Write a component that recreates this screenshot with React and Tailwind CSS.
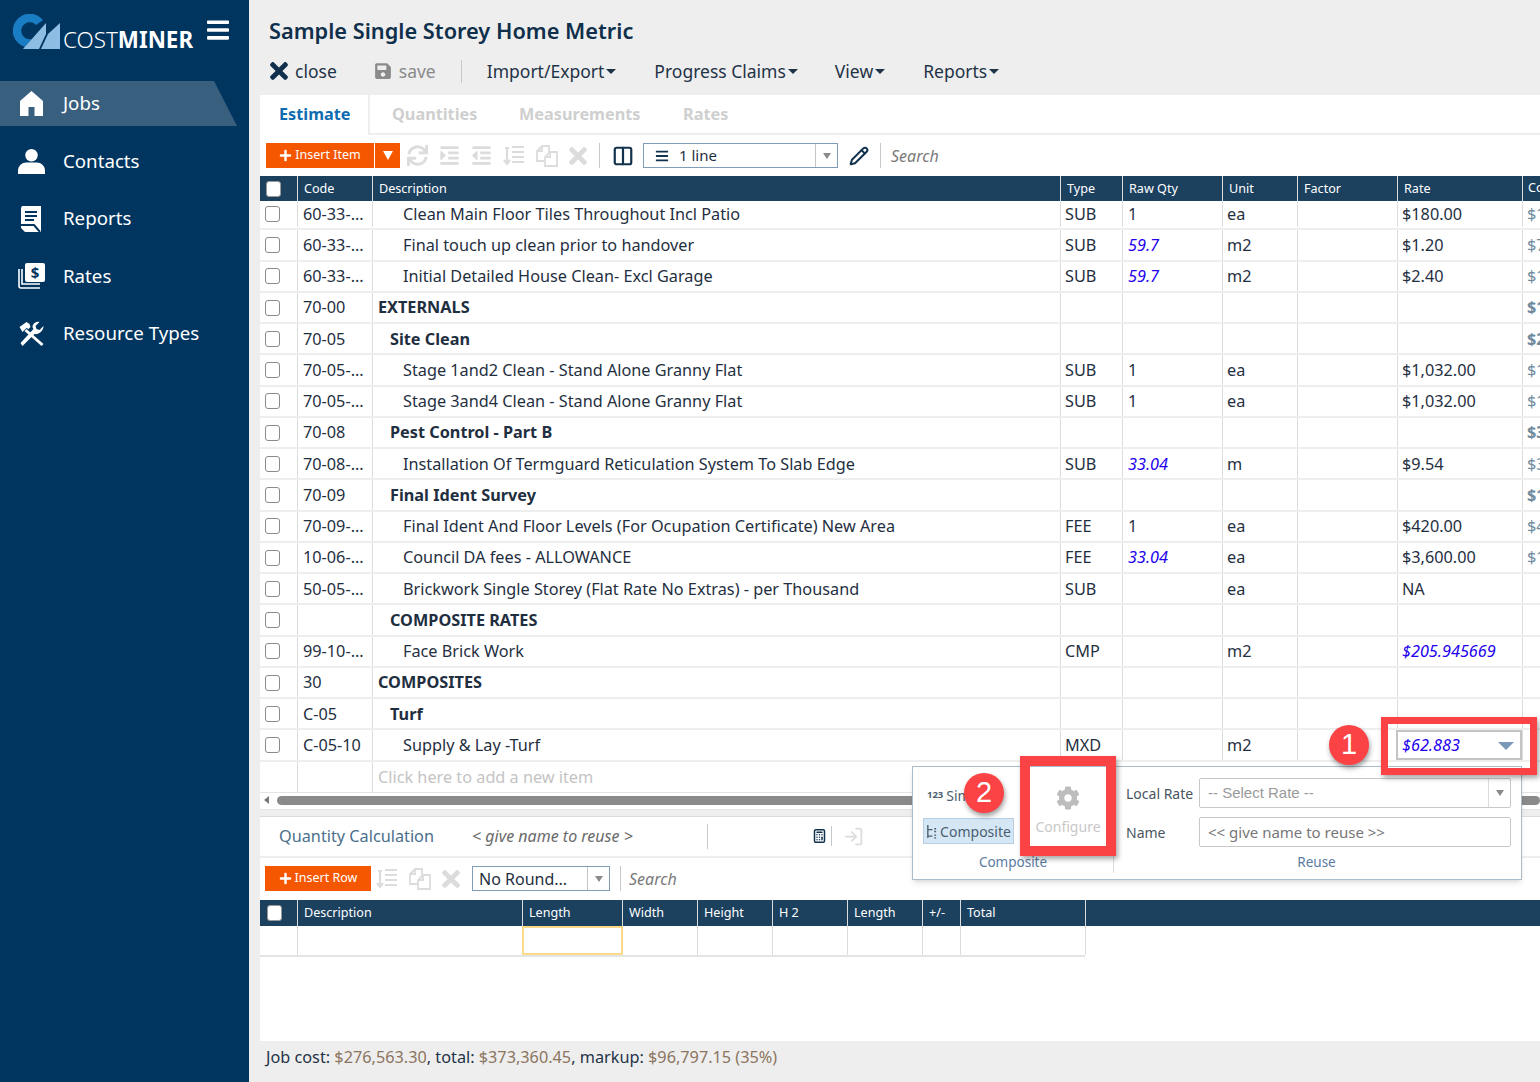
import React from 'react';
import { Pencil, Calculator, LogIn, Columns2 } from 'lucide-react';
import { FaTimes, FaSave, FaSync, FaIndent, FaOutdent, FaBars, FaCog, FaPlus } from 'react-icons/fa';

const COLS = 'grid grid-cols-[38px_75px_688px_62px_100px_75px_100px_125px_1fr]';
const QCOLS = 'grid grid-cols-[38px_225px_100px_75px_75px_75px_75px_38px_125px] w-[825px]';

const rows = [
  { code: '60-33-...', desc: 'Clean Main Floor Tiles Throughout Incl Patio', lvl: 2, type: 'SUB', qty: '1', unit: 'ea', rate: '$180.00', cost: '$180.00', first: true },
  { code: '60-33-...', desc: 'Final touch up clean prior to handover', lvl: 2, type: 'SUB', qty: '59.7', blueQty: true, unit: 'm2', rate: '$1.20', cost: '$71.64' },
  { code: '60-33-...', desc: 'Initial Detailed House Clean- Excl Garage', lvl: 2, type: 'SUB', qty: '59.7', blueQty: true, unit: 'm2', rate: '$2.40', cost: '$143.28' },
  { code: '70-00', desc: 'EXTERNALS', lvl: 0, bold: true, cost: '$1' },
  { code: '70-05', desc: 'Site Clean', lvl: 1, bold: true, cost: '$2' },
  { code: '70-05-...', desc: 'Stage 1and2 Clean - Stand Alone Granny Flat', lvl: 2, type: 'SUB', qty: '1', unit: 'ea', rate: '$1,032.00', cost: '$1,032.00' },
  { code: '70-05-...', desc: 'Stage 3and4 Clean - Stand Alone Granny Flat', lvl: 2, type: 'SUB', qty: '1', unit: 'ea', rate: '$1,032.00', cost: '$1,032.00' },
  { code: '70-08', desc: 'Pest Control - Part B', lvl: 1, bold: true, cost: '$3' },
  { code: '70-08-...', desc: 'Installation Of Termguard Reticulation System To Slab Edge', lvl: 2, type: 'SUB', qty: '33.04', blueQty: true, unit: 'm', rate: '$9.54', cost: '$315.20' },
  { code: '70-09', desc: 'Final Ident Survey', lvl: 1, bold: true, cost: '$1' },
  { code: '70-09-...', desc: 'Final Ident And Floor Levels (For Ocupation Certificate) New Area', lvl: 2, type: 'FEE', qty: '1', unit: 'ea', rate: '$420.00', cost: '$420.00' },
  { code: '10-06-...', desc: 'Council DA fees - ALLOWANCE', lvl: 2, type: 'FEE', qty: '33.04', blueQty: true, unit: 'ea', rate: '$3,600.00', cost: '$118,944' },
  { code: '50-05-...', desc: 'Brickwork Single Storey (Flat Rate No Extras) - per Thousand', lvl: 2, type: 'SUB', unit: 'ea', rate: 'NA' },
  { code: '', desc: 'COMPOSITE RATES', lvl: 1, bold: true },
  { code: '99-10-...', desc: 'Face Brick Work', lvl: 2, type: 'CMP', unit: 'm2', rate: '$205.945669', blueRate: true },
  { code: '30', desc: 'COMPOSITES', lvl: 0, bold: true },
  { code: 'C-05', desc: 'Turf', lvl: 1, bold: true },
  { code: 'C-05-10', desc: 'Supply & Lay -Turf', lvl: 2, type: 'MXD', unit: 'm2' },
];

const nav = [
  { label: 'Jobs', icon: <HomeIcon />, active: true },
  { label: 'Contacts', icon: <UserIcon /> },
  { label: 'Reports', icon: <ReportIcon /> },
  { label: 'Rates', icon: <RatesIcon /> },
  { label: 'Resource Types', icon: <ToolsIcon /> },
];

function HomeIcon() {
  return (
    <svg viewBox="0 0 23 25" className="w-[23px] h-[25px] ml-[2px]" fill="white">
      <path d="M11.5 0L23 10V25H14.5V16H8.5V25H0V10z" />
    </svg>
  );
}

function UserIcon() {
  return (
    <svg viewBox="0 0 26 26" className="w-[27px] h-[27px]" fill="white">
      <circle cx="13" cy="7" r="6" />
      <path d="M0 25v-3c0-5 4-8 8-8h10c4 0 8 3 8 8v3z" />
    </svg>
  );
}

function ReportIcon() {
  return (
    <svg viewBox="0 0 22 26" className="w-[22px] h-[26px] ml-[2px]">
      <path d="M2 0h19v26H5l-4-4V2z" fill="white" />
      <path d="M5 6h12M5 10h12M5 14h9M0 19h14l6 7" stroke="#00355f" strokeWidth="2" fill="none" />
    </svg>
  );
}

function RatesIcon() {
  return (
    <svg viewBox="0 0 27 26" className="w-[27px] h-[26px]">
      <rect x="7" y="0" width="20" height="19" rx="2" fill="white" />
      <path d="M1 6v17a2 2 0 0 0 2 2h19M4 6v15h18" stroke="white" strokeWidth="1.6" fill="none" />
      <text x="17" y="15" fontSize="15" fontWeight="700" fill="#00355f" textAnchor="middle" fontFamily="Noto Sans">$</text>
    </svg>
  );
}

function ToolsIcon() {
  return (
    <svg viewBox="0 0 26 26" className="w-[27px] h-[26px]" fill="white">
      <path d="M1 6l7-5 3 2 1 3-2 2-2-1-4 4z" />
      <path d="M8 8l17 15-2 2L6 10z" />
      <path d="M25 5l-4 4-3-1-1-3 4-4c-3-1-6 1-7 4 0 1 0 2 1 3L2 22l2 3 12-12c4 1 9-3 9-8z" />
    </svg>
  );
}

function Logo() {
  return (
    <svg viewBox="0 0 48 36" className="w-[48px] h-[36px] shrink-0">
      <path d="M30 6A17 17 0 1 0 12 33L19 25A8.5 8.5 0 1 1 23 11z" fill="#1a7dc4" />
      <path d="M10 35L33 9V20L26 35z" fill="#8dbde3" />
      <path d="M28 35L35 20L47 9V35z" fill="#8dbde3" />
    </svg>
  );
}

function RowsIcon() {
  return (
    <svg viewBox="0 0 22 22" className="w-[22px] h-[22px]" fill="none" stroke="#dcdcdc" strokeWidth="2.2">
      <path d="M9 2h12M9 7h12M9 12h12M9 17h12M4 3v15M1 15l3 4 3-4M2 3h4" />
    </svg>
  );
}

function CopyFaded() {
  return (
    <svg viewBox="0 0 22 22" className="w-[22px] h-[22px]" fill="none" stroke="#dcdcdc" strokeWidth="1.8">
      <path d="M8 16H1V6l5-5h7v6" />
      <path d="M14 7h7v14H9V12z" />
      <path d="M9 12h5V7M1 6h5V1" />
    </svg>
  );
}

function DisabledX() {
  return <FaTimes className="w-[18px] h-[26px] text-[#dcdcdc]" />;
}

function Check({ white }) {
  return (
    <span className={`block w-[15px] h-[16px] rounded-[3px] border ${white ? 'bg-white border-[#999]' : 'bg-white border-[#8a8a8a]'}`} />
  );
}

function Combo({ className, children }) {
  return (
    <div className={`flex items-stretch border border-[#7f9db9] bg-white ${className}`}>
      <div className="flex-1 flex items-center min-w-0">{children}</div>
      <div className="w-[22px] border-l border-[#c5c5c5] flex items-center justify-center">
        <span className="w-0 h-0 border-x-[4px] border-x-transparent border-t-[6px] border-t-[#8a8a8a]" />
      </div>
    </div>
  );
}

function Row({ r }) {
  const pad = r.lvl === 0 ? 'pl-[5px]' : r.lvl === 1 ? 'pl-[17px]' : 'pl-[30px]';
  return (
    <div className={`${COLS} ${r.first ? 'h-[29.4px] pb-[1.4px]' : 'h-[31.25px]'} border-b-2 border-[#eeeeee] text-[16.25px] text-[#1f2f3f] leading-none`}>
      <div className="border-r border-[#dcdcdc] flex items-center pl-[5px]"><Check /></div>
      <div className="border-r border-[#dcdcdc] flex items-center pl-[5px]">{r.code}</div>
      <div className={`border-r border-[#dcdcdc] flex items-center ${pad} ${r.bold ? 'font-bold' : ''}`}>{r.desc}</div>
      <div className="border-r border-[#dcdcdc] flex items-center pl-[4px]">{r.type}</div>
      <div className={`border-r border-[#dcdcdc] flex items-center pl-[5px] ${r.blueQty ? 'italic text-[#2200ee]' : ''}`}>{r.qty}</div>
      <div className="border-r border-[#dcdcdc] flex items-center pl-[4px]">{r.unit}</div>
      <div className="border-r border-[#dcdcdc]" />
      <div className={`border-r border-[#dcdcdc] flex items-center pl-[4px] ${r.blueRate ? 'italic text-[#2200ee]' : ''}`}>{r.rate}</div>
      <div className={`flex items-center pl-[4px] overflow-hidden whitespace-nowrap text-[#6f8a9c] ${r.bold ? 'font-bold text-[#5f6f7c]' : ''}`}>{r.cost}</div>
    </div>
  );
}

export default function App() {
  return (
    <div className="w-[1540px] h-[1082px] flex overflow-hidden bg-[#eeeeee] text-[#1f2f3f] font-['Noto_Sans','Open_Sans',sans-serif]">
      {/* sidebar */}
      <aside className="w-[249px] shrink-0 bg-[#00355f] text-white">
        <div className="h-[81px] flex items-start pl-[13px] pt-[14px] relative">
          <Logo />
          <span className="text-[22.4px] leading-none mt-[15px] ml-[2px] font-light">COST<span className="font-bold">MINER</span></span>
          <FaBars className="absolute left-[207px] top-[16px] w-[22px] h-[28px]" />
        </div>
        <nav className="flex flex-col">
          {nav.map((n) => (
            <div
              key={n.label}
              className={`h-[45px] mb-[12.5px] flex items-center pl-[18px] w-[237px] text-[18.7px] ${n.active ? 'bg-[#395f7f] [clip-path:polygon(0_0,214px_0,100%_100%,0_100%)]' : ''}`}
            >
              <span className="w-[45px] flex items-center">{n.icon}</span>
              {n.label}
            </div>
          ))}
        </nav>
      </aside>

      {/* main */}
      <main className="flex-1 min-w-0 flex flex-col pl-[11px] relative">
        <h1 className="h-[48px] pt-[14px] pl-[9px] text-[21.75px] leading-[33px] font-semibold text-[#0f2f4a]">Sample Single Storey Home Metric</h1>
        <div className="h-[47px] pb-[1px] flex items-center pl-[10px] text-[17.5px] text-[#1f3347]">
          <FaTimes className="w-[18px] h-[26px] text-[#0f2f4a] mr-[7px]" />
          <span className="mr-[37px]">close</span>
          <FaSave className="w-[18px] h-[18px] text-[#8a8a8a] mr-[7px]" />
          <span className="text-[#8a8a8a] mr-[25px]">save</span>
          <span className="w-px h-[23px] bg-[#c8c8c8] mr-[25px]" />
          {[['Import/Export', 'mr-[38px]'], ['Progress Claims', 'mr-[37px]'], ['View', 'mr-[38px]'], ['Reports', '']].map(([t, m]) => (
            <span key={t} className={`flex items-center ${m}`}>
              {t}
              <span className="ml-[2px] w-0 h-0 border-x-[5px] border-x-transparent border-t-[5px] border-t-[#1f3347]" />
            </span>
          ))}
        </div>

        <section className="flex-1 min-h-0 bg-white flex flex-col">
          {/* tabs */}
          <div className="h-[40px] flex text-[16.25px] font-bold text-[#cfcfcf] border-b-2 border-[#eeeeee]">
            <div className="w-[110px] -mb-[2px] bg-white border-r-2 border-[#eeeeee] pl-[19px] pt-[7px] text-[#0f6cb0]">Estimate</div>
            <div className="pl-[22px] pt-[7px] w-[149px]">Quantities</div>
            <div className="pt-[7px] w-[164px]">Measurements</div>
            <div className="pt-[7px]">Rates</div>
          </div>

          {/* toolbar */}
          <div className="h-[41px] flex items-center pl-[6px]">
            <div className="flex h-[25px] text-white text-[12.5px]">
              <button className="w-[108px] bg-[#f55600] flex items-center justify-center gap-[3px]">
                <FaPlus className="w-[13px] h-[13px]" />Insert Item
              </button>
              <button className="ml-px w-[25px] bg-[#f55600] flex items-center justify-center">
                <span className="w-0 h-0 border-x-[5px] border-x-transparent border-t-[9px] border-t-white" />
              </button>
            </div>
            <div className="flex items-center gap-[11px] ml-[7px]">
              <FaSync className="w-[21px] h-[21px] text-[#dcdcdc]" />
              <FaIndent className="w-[21px] h-[21px] text-[#dcdcdc]" />
              <FaOutdent className="w-[21px] h-[21px] text-[#dcdcdc]" />
              <RowsIcon />
              <CopyFaded />
              <DisabledX />
            </div>
            <span className="w-px h-[25px] bg-[#c8c8c8] ml-[12px] mr-[12px]" />
            <Columns2 className="w-[22px] h-[22px] text-[#12324d] mr-[9px]" strokeWidth={2.4} />
            <Combo className="w-[195px] h-[25px] text-[15px]">
              <FaBars className="w-[14px] h-[14px] ml-[11px] mr-[10px] text-[#12324d]" />
              1 line
            </Combo>
            <Pencil className="w-[20px] h-[20px] ml-[11px] text-[#12324d]" strokeWidth={2.4} />
            <span className="w-px h-[25px] bg-[#c8c8c8] ml-[11px] mr-[10px]" />
            <span className="italic text-[16px] text-[#7a7a7a]">Search</span>
          </div>

          {/* estimate grid */}
          <div className={`${COLS} h-[25px] bg-[#1c415f] text-white text-[12.6px] items-center shrink-0`}>
            <div className="h-full border-r border-[#dcdcdc] flex items-center pl-[6px]"><Check white /></div>
            {['Code', 'Description', 'Type', 'Raw Qty', 'Unit', 'Factor', 'Rate'].map((h) => (
              <div key={h} className="h-full pt-[1px] border-r border-[#dcdcdc] flex items-center pl-[6px]">{h}</div>
            ))}
            <div className="pl-[5px] overflow-hidden">Cost</div>
          </div>
          {rows.map((r, i) => <Row key={i} r={r} />)}
          <div className={`${COLS} h-[30px] text-[16.25px] text-[#c4c4c4] leading-none shrink-0`}>
            <div className="border-r border-[#dcdcdc]" />
            <div className="border-r border-[#dcdcdc]" />
            <div className="flex items-center pl-[5px]">Click here to add a new item</div>
          </div>

          {/* scrollbar */}
          <div className="h-[18px] pb-[1px] border-y border-[#e4e4e4] flex items-center pl-[4px] shrink-0">
            <span className="w-0 h-0 border-y-[4px] border-y-transparent border-r-[5px] border-r-[#777] mr-[8px]" />
            <span className="flex-1 h-[9px] rounded-full bg-[#8a8a8a]" />
          </div>
          <div className="h-[7px] bg-[#eeeeee] border-b border-[#dcdcdc] shrink-0" />

          {/* quantity calculation */}
          <div className="h-[41px] flex items-center border-b-2 border-[#eeeeee] shrink-0">
            <span className="w-[212px] pl-[19px] text-[16.25px] text-[#4a6f8c]">Quantity Calculation</span>
            <span className="italic text-[16px] text-[#6a6a6a] w-[235px]">&lt; give name to reuse &gt;</span>
            <span className="w-px h-[25px] bg-[#c8c8c8] mr-[104px]" />
            <Calculator className="w-[15px] h-[18px] text-[#12324d]" strokeWidth={2.4} />
            <span className="w-px h-[20px] bg-[#c8c8c8] ml-[4px] mr-[11px]" />
            <LogIn className="w-[21px] h-[21px] text-[#dcdcdc]" strokeWidth={2} />
          </div>
          <div className="h-[42px] flex items-center pl-[5px] shrink-0">
            <button className="w-[106px] h-[25px] bg-[#f55600] text-white text-[12.5px] flex items-center justify-center gap-[3px]">
              <FaPlus className="w-[13px] h-[13px]" />Insert Row
            </button>
            <div className="flex items-center gap-[11px] ml-[5px]">
              <RowsIcon />
              <CopyFaded />
              <DisabledX />
            </div>
            <Combo className="w-[138px] h-[25px] text-[16px] ml-[12px]">
              <span className="pl-[6px] truncate">No Round...</span>
            </Combo>
            <span className="w-px h-[25px] bg-[#c8c8c8] ml-[10px] mr-[8px]" />
            <span className="italic text-[16px] text-[#7a7a7a]">Search</span>
          </div>
          <div className="h-[26px] bg-[#1c415f] text-white text-[12.6px] shrink-0">
            <div className={`${QCOLS} h-full`}>
              <div className="border-r border-[#dcdcdc] flex items-center pl-[7px]"><Check white /></div>
              {['Description', 'Length', 'Width', 'Height', 'H 2', 'Length', '+/-', 'Total'].map((h, i) => (
                <div key={i} className="pt-[1px] border-r border-[#dcdcdc] flex items-center pl-[6px]">{h}</div>
              ))}
            </div>
          </div>
          <div className={`${QCOLS} h-[31px] border-b-2 border-[#e4e4e4] shrink-0`}>
            <div className="border-r border-[#dcdcdc]" />
            <div className="border-r border-[#dcdcdc]" />
            <div className="-ml-px border-2 border-[#fdd98a]" />
            {[0, 1, 2, 3, 4, 5].map((i) => <div key={i} className="border-r border-[#dcdcdc]" />)}
          </div>
        </section>

        <footer className="h-[41px] shrink-0 flex items-center pl-[6px] pb-[9px] text-[16.25px] text-[#1f3347]">
          Job cost:&nbsp;<span className="text-[#8c7560]">$276,563.30</span>, total:&nbsp;<span className="text-[#8c7560]">$373,360.45</span>, markup:&nbsp;<span className="text-[#8c7560]">$96,797.15 (35%)</span>
        </footer>

        {/* rate cell + callouts, laid over the grid */}
        <div className="absolute left-[1147px] top-[730px] w-[126px] h-[30px] bg-white border-2 border-[#c4c4c4] flex items-center pl-[4px] italic text-[16.25px] text-[#2200ee]">
          $62.883
          <span className="absolute right-[6px] top-[10px] w-0 h-0 border-x-[8px] border-x-transparent border-t-[8px] border-t-[#7b98b8]" />
        </div>

        {/* rate popover */}
        <div className="absolute left-[663px] top-[766px] w-[610px] h-[114px] bg-white border border-[#a8bccb] shadow-md flex text-[14px]">
          <div className="w-[201px] border-r border-[#dcdcdc] my-[6px] relative">
            <div className="absolute left-[14px] top-[12px] flex items-center gap-[3px] text-[#4a5f70]">
              <span className="text-[9.5px] font-bold">123</span> Simple
            </div>
            <div className="absolute left-[10px] top-[45px] w-[91px] h-[26px] bg-[#d5e6f5] border border-[#b8cfe3] flex items-center justify-center gap-[3px] text-[#4a5f70]">
              <svg viewBox="0 0 12 16" className="w-[11px] h-[15px] shrink-0" fill="none" stroke="#4a5f70" strokeWidth="1.5">
                <path d="M2 1v14M2 6h5M2 13h5M9 5h2M9 8h2M9 12h2M9 15h2" />
              </svg>
              Composite
            </div>
            <div className="absolute left-[122px] top-[4px] w-[66px] h-[72px] flex flex-col items-center pt-[9px] text-[14px] text-[#c8c8c8] whitespace-nowrap">
              <FaCog className="w-[24px] h-[24px] text-[#bdbdbd]" />
              <span className="mt-[6px]">Configure</span>
            </div>
            <div className="absolute inset-x-0 top-[79px] text-center text-[13.5px] text-[#5a7ba3]">Composite</div>
          </div>
          <div className="flex-1 pt-[11px] pl-[12px] pr-[10px] text-[#4a5560]">
            <div className="flex items-center gap-[7px] h-[30px]">
              <span className="w-[66px] text-[14px] whitespace-nowrap">Local Rate</span>
              <div className="flex-1 h-[30px] flex border border-[#c8c8c8] rounded-[2px] text-[15px] text-[#9a9a9a] font-['Liberation_Sans',sans-serif]">
                <span className="flex-1 flex items-center pl-[8px]">-- Select Rate --</span>
                <span className="w-[22px] border-l border-[#dcdcdc] flex items-center justify-center">
                  <span className="w-0 h-0 border-x-[4px] border-x-transparent border-t-[6px] border-t-[#8a8a8a]" />
                </span>
              </div>
            </div>
            <div className="flex items-center gap-[7px] h-[30px] mt-[9px]">
              <span className="w-[66px] text-[14px]">Name</span>
              <div className="flex-1 h-[30px] flex items-center border border-[#c8c8c8] rounded-[2px] pl-[8px] text-[15px] text-[#777]">&lt;&lt; give name to reuse &gt;&gt;</div>
            </div>
            <div className="text-center text-[13.5px] text-[#5a7ba3] mt-[5px] pr-[4px]">Reuse</div>
          </div>
        </div>

        {/* red highlight boxes */}
        <div className="absolute left-[1132px] top-[717px] w-[156px] h-[58px] border-[7px] border-[#fb4245] shadow-[2px_3px_5px_rgba(0,0,0,0.35)]" />
        <div className="absolute left-[771px] top-[756px] w-[96px] h-[100px] border-[10px] border-[#fb4245] shadow-[2px_3px_5px_rgba(0,0,0,0.35)]" />
        <div className="absolute left-[1080px] top-[725px] w-[40px] h-[40px] rounded-full bg-[#fb4245] text-white text-[29px] flex items-center justify-center shadow-[1px_3px_5px_rgba(0,0,0,0.4)] font-['Liberation_Sans',sans-serif]">1</div>
        <div className="absolute left-[715px] top-[773px] w-[40px] h-[40px] rounded-full bg-[#fb4245] text-white text-[29px] flex items-center justify-center shadow-[1px_3px_5px_rgba(0,0,0,0.4)] font-['Liberation_Sans',sans-serif]">2</div>
      </main>
    </div>
  );
}
